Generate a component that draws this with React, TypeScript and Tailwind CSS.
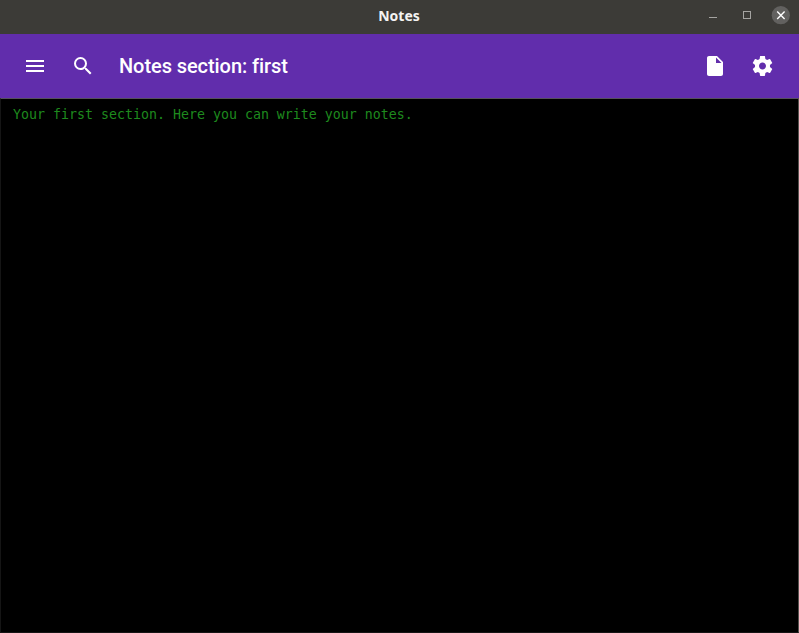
import type { ReactNode } from "react";

function IconButton({ label, children }: { label: string; children: ReactNode }) {
  return (
    <button type="button" aria-label={label} className="flex size-12 items-center justify-center">
      {children}
    </button>
  );
}

function Icon({ path, viewBox = "0 0 24 24" }: { path: string; viewBox?: string }) {
  return (
    <svg viewBox={viewBox} className="size-6 fill-white">
      <path d={path} />
    </svg>
  );
}

function TitleBar() {
  return (
    <header className="grid h-[34px] shrink-0 grid-cols-[1fr_auto_1fr] items-center bg-[#3c3b37]">
      <span />
      <h1 className="pr-px pb-[3px] font-['Noto_Sans',sans-serif] text-[14px] leading-5 font-bold text-[#f4f3f2]">Notes</h1>
      <div className="flex items-center justify-end gap-[15px] pr-[9px] pb-[3px]">
        <svg viewBox="0 0 19 19" className="size-[19px]" shapeRendering="crispEdges">
          <path d="M6 11.5h8" stroke="#a5a4a1" fill="none" />
        </svg>
        <svg viewBox="0 0 19 19" className="size-[19px]" shapeRendering="crispEdges">
          <path d="M6.5 5.5h7v7h-7z" stroke="#a5a4a1" fill="none" />
        </svg>
        <svg viewBox="0 0 19 19" className="size-[19px]">
          <circle cx="9.8" cy="9.2" r="9.1" fill="#62615f" />
          <path d="M6.2 5.6l7.4 7.4M13.6 5.6l-7.4 7.4" stroke="#fff" strokeWidth="1.4" fill="none" />
        </svg>
      </div>
    </header>
  );
}

export default function App() {
  return (
    <div className="flex h-screen w-full flex-col overflow-hidden bg-black">
      <TitleBar />
      <nav className="flex h-16 shrink-0 items-center bg-[#612dac] pr-[13px] pl-[11px]">
        <IconButton label="Menu">
          <Icon path="M3 18h18v-2H3v2zm0-5h18v-2H3v2zm0-7v2h18V6H3z" />
        </IconButton>
        <IconButton label="Search">
          <Icon path="M15.5 14h-.79l-.28-.27A6.471 6.471 0 0 0 16 9.5 6.5 6.5 0 1 0 9.5 16c1.61 0 3.09-.59 4.23-1.57l.27.28v.79l5 4.99L20.49 19l-4.99-5zm-6 0C7.01 14 5 11.99 5 9.5S7.01 5 9.5 5 14 7.01 14 9.5 11.99 14 9.5 14z" />
        </IconButton>
        <h2 className="pl-3 font-[Roboto,sans-serif] text-xl font-medium tracking-[-0.07px] text-white">Notes section: first</h2>
        <div className="ml-auto flex -space-x-px">
          <IconButton label="New note">
            <Icon path="M14 2H6c-1.1 0-1.99.9-1.99 2L4 20c0 1.1.89 2 1.99 2H18c1.1 0 2-.9 2-2V8l-6-6zm-1 7V3.5L18.5 9H13z" />
          </IconButton>
          <IconButton label="Settings">
            <Icon
              viewBox="-0.5 0 24 24"
              path="M19.43 12.98c.04-.32.07-.64.07-.98s-.03-.66-.07-.98l2.11-1.65c.19-.15.24-.42.12-.64l-2-3.46c-.12-.22-.39-.3-.61-.22l-2.49 1c-.52-.4-1.08-.73-1.69-.98l-.38-2.65C14.46 2.18 14.25 2 14 2h-4c-.25 0-.46.18-.49.42l-.38 2.65c-.61.25-1.17.59-1.69.98l-2.49-1c-.23-.09-.49 0-.61.22l-2 3.46c-.13.22-.07.49.12.64l2.11 1.65c-.04.32-.07.65-.07.98s.03.66.07.98l-2.11 1.65c-.19.15-.24.42-.12.64l2 3.46c.12.22.39.3.61.22l2.49-1c.52.4 1.08.73 1.69.98l.38 2.65c.03.24.24.42.49.42h4c.25 0 .46-.18.49-.42l.38-2.65c.61-.25 1.17-.59 1.69-.98l2.49 1c.23.09.49 0 .61-.22l2-3.46c.12-.22.07-.49-.12-.64l-2.11-1.65zM12 15.5c-1.93 0-3.5-1.57-3.5-3.5s1.57-3.5 3.5-3.5 3.5 1.57 3.5 3.5-1.57 3.5-3.5 3.5z"
            />
          </IconButton>
        </div>
      </nav>
      <main className="flex-1 border border-t-[#55505c] border-r-[#55534f] border-b-[#151515] border-l-[#151515] px-3 pt-1.5 font-['DejaVu_Sans_Mono',monospace] text-[13.29px] leading-5 text-[#1e8a1e]">
        <p>Your first section. Here you can write your notes.</p>
      </main>
    </div>
  );
}
